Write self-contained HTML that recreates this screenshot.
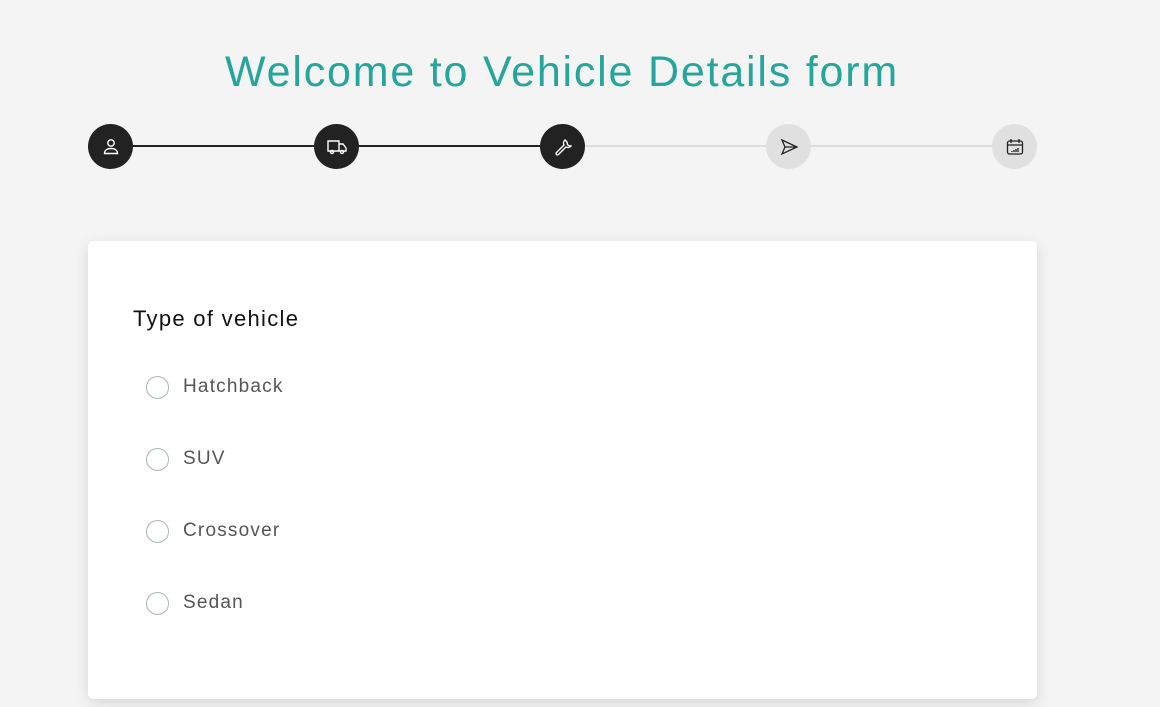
<!DOCTYPE html>
<html><head><style>
body{margin:0;width:1160px;height:707px;background:#f4f4f4;font-family:"Liberation Sans",sans-serif;position:relative;overflow:hidden}
h1{position:absolute;left:0;width:1124px;top:48px;margin:0;text-align:center;font-weight:normal;font-size:43px;color:#26a69a;letter-spacing:1.8px}
.line{position:absolute;top:145px;height:2px}
.c{position:absolute;top:124px;width:45px;height:45px;border-radius:50%;display:flex;align-items:center;justify-content:center}
.d{background:#222}.g{background:#e0e0e0}
.card{position:absolute;left:88px;top:241px;width:949px;height:458px;background:#fff;border-radius:5px;box-shadow:0 4px 14px rgba(0,0,0,0.12)}
.q{position:absolute;left:45px;top:65px;font-size:22px;color:#111;letter-spacing:1.3px}
.r{position:absolute;left:58px;width:21px;height:21px;border:1px solid #a9b4bb;border-radius:50%}
.l{position:absolute;left:95px;font-size:19px;color:#555;letter-spacing:1.2px}
</style></head><body>
<h1>Welcome to Vehicle Details form</h1>
<div class="line" style="left:130px;width:414px;background:#222"></div>
<div class="line" style="left:582px;width:414px;background:#ddd"></div>
<div class="c d" style="left:88px"><svg width="20" height="20" viewBox="0 0 20 20" fill="none" stroke="#fff" stroke-width="1.4"><circle cx="10" cy="6" r="3.2"/><path d="M3.5 16.5c0-3.5 3-5 6.5-5s6.5 1.5 6.5 5z"/></svg></div>
<div class="c d" style="left:314px"><svg width="22" height="20" viewBox="0 0 22 20" fill="none" stroke="#fff" stroke-width="1.4"><path d="M2 4h11v10H2zM13 7h4l3 4v3h-7"/><circle cx="6" cy="15" r="1.5"/><circle cx="16" cy="15" r="1.5"/></svg></div>
<div class="c d" style="left:540px"><svg width="20" height="20" viewBox="0 0 20 20" fill="none" stroke="#fff" stroke-width="1.4"><path d="M12 3a4 4 0 0 0-1 5L3.5 15.5a1.4 1.4 0 0 0 2 2L13 10a4 4 0 0 0 5-1l-2.5-.5-1-1-.5-2.5z"/></svg></div>
<div class="c g" style="left:766px"><svg width="20" height="20" viewBox="0 0 20 20" fill="none" stroke="#222" stroke-width="1.3"><path d="M3 3l15 7-15 7 3-7zM6 10h12"/></svg></div>
<div class="c g" style="left:992px"><svg width="20" height="20" viewBox="0 0 20 20" fill="none" stroke="#222" stroke-width="1.3"><rect x="2.5" y="4" width="15" height="13" rx="2"/><path d="M2.5 8h15M6 2v4M14 2v4M7 14v1M9 13v2M11 12v3M13 11v4"/></svg></div>
<div class="card">
<div class="q">Type of vehicle</div>
<div class="r" style="top:135px"></div><div class="l" style="top:135px">Hatchback</div>
<div class="r" style="top:207px"></div><div class="l" style="top:207px">SUV</div>
<div class="r" style="top:279px"></div><div class="l" style="top:279px">Crossover</div>
<div class="r" style="top:351px"></div><div class="l" style="top:351px">Sedan</div>
</div>
</body></html>
